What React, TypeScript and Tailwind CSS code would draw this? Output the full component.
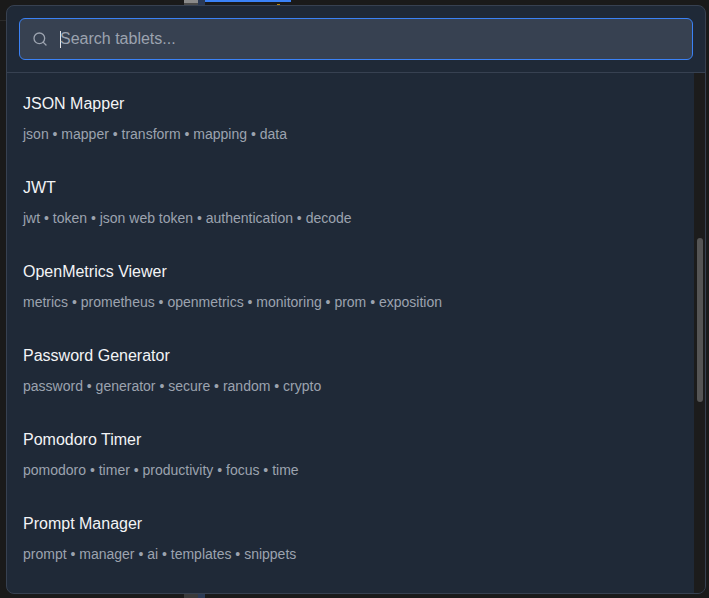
import { Search } from "lucide-react";

const items = [
  ["JSON Mapper", "json • mapper • transform • mapping • data"],
  ["JWT", "jwt • token • json web token • authentication • decode"],
  ["OpenMetrics Viewer", "metrics • prometheus • openmetrics • monitoring • prom • exposition"],
  ["Password Generator", "password • generator • secure • random • crypto"],
  ["Pomodoro Timer", "pomodoro • timer • productivity • focus • time"],
  ["Prompt Manager", "prompt • manager • ai • templates • snippets"],
];

export default function App() {
  return (
    <div className="relative h-[598px] w-[709px] overflow-hidden bg-[#1a1a1a] font-['Liberation_Sans',Arial,sans-serif]">
      <div className="absolute left-[184px] top-0 flex h-[6px] w-[14px] flex-col">
        <div className="h-[3px] bg-[#8a8a8a]" />
        <div className="h-[3px] bg-[#4a4a4a]" />
      </div>
      <div className="absolute left-[198px] top-0 h-[6px] w-[7px] bg-[#2b3a55]" />
      <div className="absolute left-[205px] top-0 h-[2px] w-[86px] bg-[#3b82f6]" />
      <div className="absolute left-[277px] top-[4px] h-[1px] w-[3px] bg-[#b8860b]" />
      <div className="absolute left-0 top-[20px] h-px w-[6px] bg-[#2a2a2a]" />
      <div className="absolute left-[184px] bottom-0 h-[5px] w-[14px] bg-[#3a3a3a]" />
      <div className="absolute left-[198px] bottom-0 h-[5px] w-[7px] bg-[#2b3a55]" />
      <div className="absolute left-[6px] top-[5px] flex h-[589px] w-[700px] flex-col overflow-hidden rounded-lg border border-[#374151] bg-[#1f2937]">
        <div className="border-b border-[#374151] p-3">
          <div className="flex h-[42px] items-center rounded-md border border-[#3b82f6] bg-[#374151] px-3">
            <Search className="h-4 w-4 text-[#9ca3af]" strokeWidth={2} />
            <div className="ml-[12px] flex items-center text-base text-[#9ca3af]">
              <span className="h-[17px] w-px bg-[#e5e7eb]" />
              <span className="-ml-px">Search tablets...</span>
            </div>
          </div>
        </div>
        <div className="flex min-h-0 flex-1">
          <div className="flex-1 overflow-hidden pl-4 pt-[1px]">
            {items.map(([title, tags]) => (
              <div key={title} className="flex h-[84px] flex-col pt-[18px]">
                <div className="text-base leading-6 text-[#f3f4f6]">{title}</div>
                <div className="mt-[8px] text-sm leading-5 text-[#9ca3af]">{tags}</div>
              </div>
            ))}
          </div>
          <div className="w-[11px] shrink-0 bg-[#1c1c1c] pl-[3px] pt-[165px]">
            <div className="h-[164px] w-[6px] rounded-full bg-[#555555]" />
          </div>
        </div>
      </div>
    </div>
  );
}
